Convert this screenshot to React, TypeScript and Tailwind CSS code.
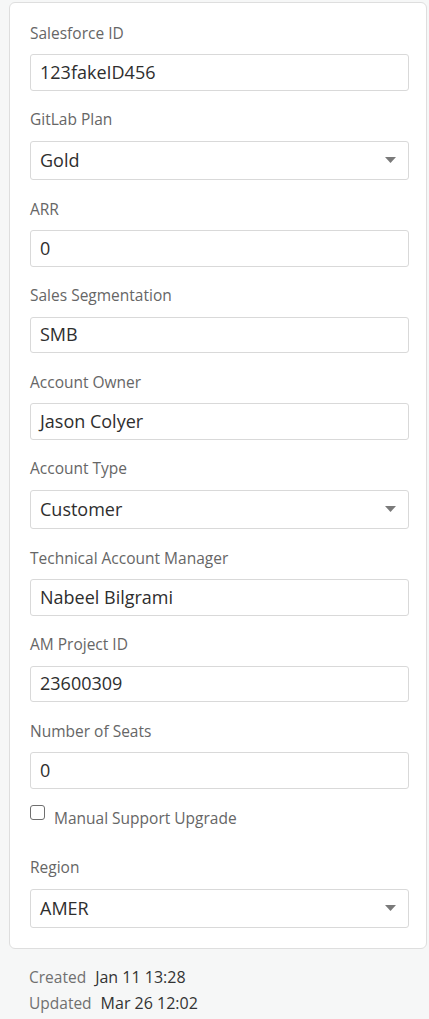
import { ReactNode } from "react";

const FONT = { fontFamily: '"Open Sans", "Noto Sans", sans-serif' };

function Label({ children }: { children: ReactNode }) {
  return (
    <div className="mb-[10.5px] text-[15.5px] leading-[21px] text-[#666]">
      {children}
    </div>
  );
}

function TextField({ label, value }: { label: string; value: string }) {
  return (
    <div className="mb-[18.5px]">
      <Label>{label}</Label>
      <div className="flex h-[36.5px] items-center rounded-[3px] border border-[#d9d9d9] bg-white px-[9px] text-[18px] text-[#2e2e2e]">
        {value}
      </div>
    </div>
  );
}

function SelectField({ label, value }: { label: string; value: string }) {
  return (
    <div className="mb-[18.5px]">
      <Label>{label}</Label>
      <div className="flex h-[39.5px] items-center justify-between rounded-[3px] border border-[#d9d9d9] bg-white pl-[9px] pr-[12px] text-[18px] text-[#2e2e2e]">
        <span>{value}</span>
        <svg width="11" height="6" viewBox="0 0 11 6" aria-hidden>
          <path d="M0 0 H11 L5.5 6 Z" fill="#7a7a7a" />
        </svg>
      </div>
    </div>
  );
}

export default function App() {
  return (
    <div className="min-h-[1019px] bg-[#f6f7f7] pt-[2px]" style={FONT}>
      <div className="ml-[9px] mr-[2px] rounded-[6px] border border-[#dedede] bg-white pl-[20px] pr-[17px] pt-[19.5px] pb-[1px]">
        <TextField label="Salesforce ID" value="123fakeID456" />
        <SelectField label="GitLab Plan" value="Gold" />
        <TextField label="ARR" value="0" />
        <TextField label="Sales Segmentation" value="SMB" />
        <TextField label="Account Owner" value="Jason Colyer" />
        <SelectField label="Account Type" value="Customer" />
        <TextField label="Technical Account Manager" value="Nabeel Bilgrami" />
        <TextField label="AM Project ID" value="23600309" />
        <TextField label="Number of Seats" value="0" />

        <label className="-mt-[3px] flex items-start gap-[9px]">
          <span className="mt-[1px] h-[15px] w-[15px] shrink-0 rounded-[3px] border border-[#6f6f6f] bg-white" />
          <span className="mt-[4px] text-[15.5px] leading-[21px] text-[#666]">
            Manual Support Upgrade
          </span>
        </label>

        <div className="mt-[28px]">
          <SelectField label="Region" value="AMER" />
        </div>
      </div>

      <div className="px-[29px] pt-[15px] text-[15.5px] leading-[26px]">
        <div>
          <span className="text-[#707070]">Created</span>
          <span className="ml-[9px] text-[16px] text-[#333]">Jan 11 13:28</span>
        </div>
        <div>
          <span className="text-[#707070]">Updated</span>
          <span className="ml-[9px] text-[16px] text-[#333]">Mar 26 12:02</span>
        </div>
      </div>
    </div>
  );
}
